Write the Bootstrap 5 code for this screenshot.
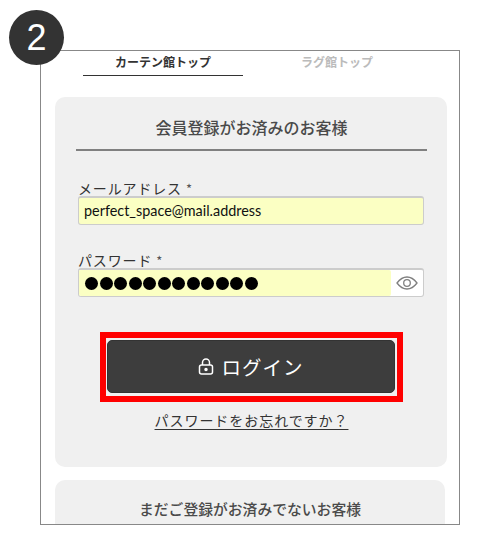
<!DOCTYPE html>
<html lang="ja">
<head>
<meta charset="utf-8">
<title>ログイン</title>
<link href="https://cdn.jsdelivr.net/npm/bootstrap@5.3.0/dist/css/bootstrap.min.css" rel="stylesheet">
<style>
html,body{height:550px;overflow:hidden;background:#fff}
body{font-family:"Noto Sans CJK JP","Lato",sans-serif;color:#333}
.shot{position:relative;width:500px;height:550px;padding:50px 40px 0}
.step{position:absolute;left:9px;top:10px;width:55px;height:55px;background:#333;color:#fff;font:36px/55px "Liberation Sans",sans-serif;text-align:center;z-index:2}
.phone{width:420px;height:475px;border:1px solid #888;overflow:hidden;padding:0 12px 0 14px}
.tabbar{padding-left:28px;gap:14px;height:46px}
.tabitem{width:160px;height:25px;font-size:12px;font-weight:700;line-height:22px;text-align:center;color:#bbb}
.tabitem.on{color:#333;border-bottom:1px solid #333}
.panel{background:#f0f0f0;border-radius:10px;width:392px;height:370px;padding:0 20px 0 21px}
.panel-head{height:54px;font-size:16px;line-height:60px;text-align:center;color:#4a4a4a;font-weight:500;border-bottom:2px solid #808080;margin-bottom:29px}
.fieldname{font-size:14px;height:16px;line-height:16px;color:#333;margin-left:2px;letter-spacing:.85px}
.fieldname i{font-style:normal;color:#555;font-size:13px}
.entry{width:346px;height:29px;margin-left:2px;border:2px solid #ccc;border-width:2px 1px 1px;border-radius:3px;background:#fbffc3;font:14.4px/26px "Lato",sans-serif;color:#111;padding-left:5px}
.mailgroup{margin-bottom:27px}
.pwentry{background:#fff;padding:0;overflow:hidden}
.pwfill{width:312px;background:#fbffc3;padding-left:6px;gap:1.55px;border-radius:0 2px 2px 0}
.pwdot{width:13px;height:13px;border-radius:50%;background:#000}
.pweye{width:32px}
.redbox{width:303px;height:70px;border:6px solid #f00;margin:35px 0 0 24px;padding:2px 2px 3px 1px}
.loginbtn{width:100%;height:100%;background:#3d3d3d;color:#fff;border:1px solid #333;border-radius:5px;font-size:19.5px;font-weight:400;letter-spacing:1px;gap:7px}
.forgot{display:block;text-align:center;margin-top:7px;font-size:14px;line-height:22px;letter-spacing:.95px;color:#333}
.forgot span{text-decoration:underline;text-underline-offset:3px}
.panel2{width:390px;height:60px;margin-top:13px;padding:0 20px}
.panel2 .panel-head{border:0;height:auto;margin:0;font-size:14.8px;line-height:57px}
</style>
</head>
<body>
<div class="shot">
  <div class="step rounded-circle">2</div>
  <div class="phone">
    <div class="tabbar d-flex">
      <div class="tabitem on">カーテン館トップ</div>
      <div class="tabitem">ラグ館トップ</div>
    </div>
    <div class="panel">
      <div class="panel-head">会員登録がお済みのお客様</div>
      <div class="mailgroup">
        <div class="fieldname">メールアドレス <i>*</i></div>
        <div class="entry">perfect_space@mail.address</div>
      </div>
      <div>
        <div class="fieldname">パスワード <i>*</i></div>
        <div class="entry pwentry d-flex">
          <div class="pwfill d-flex align-items-center">
            <span class="pwdot"></span><span class="pwdot"></span><span class="pwdot"></span><span class="pwdot"></span><span class="pwdot"></span><span class="pwdot"></span><span class="pwdot"></span><span class="pwdot"></span><span class="pwdot"></span><span class="pwdot"></span><span class="pwdot"></span><span class="pwdot"></span>
          </div>
          <div class="pweye d-flex align-items-center justify-content-center">
            <svg width="22" height="14" viewBox="0 0 22 14" fill="none" stroke="#808080" stroke-width="1.3"><path d="M1 7C4 3 7 1 11 1s7 2 10 6c-3 4-6 6-10 6S4 11 1 7Z"/><circle cx="11" cy="7" r="3.3"/></svg>
          </div>
        </div>
      </div>
      <div class="redbox">
        <button type="button" class="loginbtn btn d-flex align-items-center justify-content-center p-0">
          <svg width="16" height="17" viewBox="0 0 16 17" fill="none" stroke="#fff" stroke-width="1.5"><path d="M4.5 7V4.5a3.5 3.5 0 0 1 7 0V7"/><rect x="1.5" y="7" width="13" height="9" rx="2"/><circle cx="8" cy="11.5" r="1" fill="#fff"/></svg>
          <span>ログイン</span>
        </button>
      </div>
      <a class="forgot text-decoration-none" href="#"><span>パスワードをお忘れですか？</span></a>
    </div>
    <div class="panel panel2">
      <div class="panel-head">まだご登録がお済みでないお客様</div>
    </div>
  </div>
</div>
<script src="https://cdn.jsdelivr.net/npm/bootstrap@5.3.0/dist/js/bootstrap.bundle.min.js"></script>
</body>
</html>
